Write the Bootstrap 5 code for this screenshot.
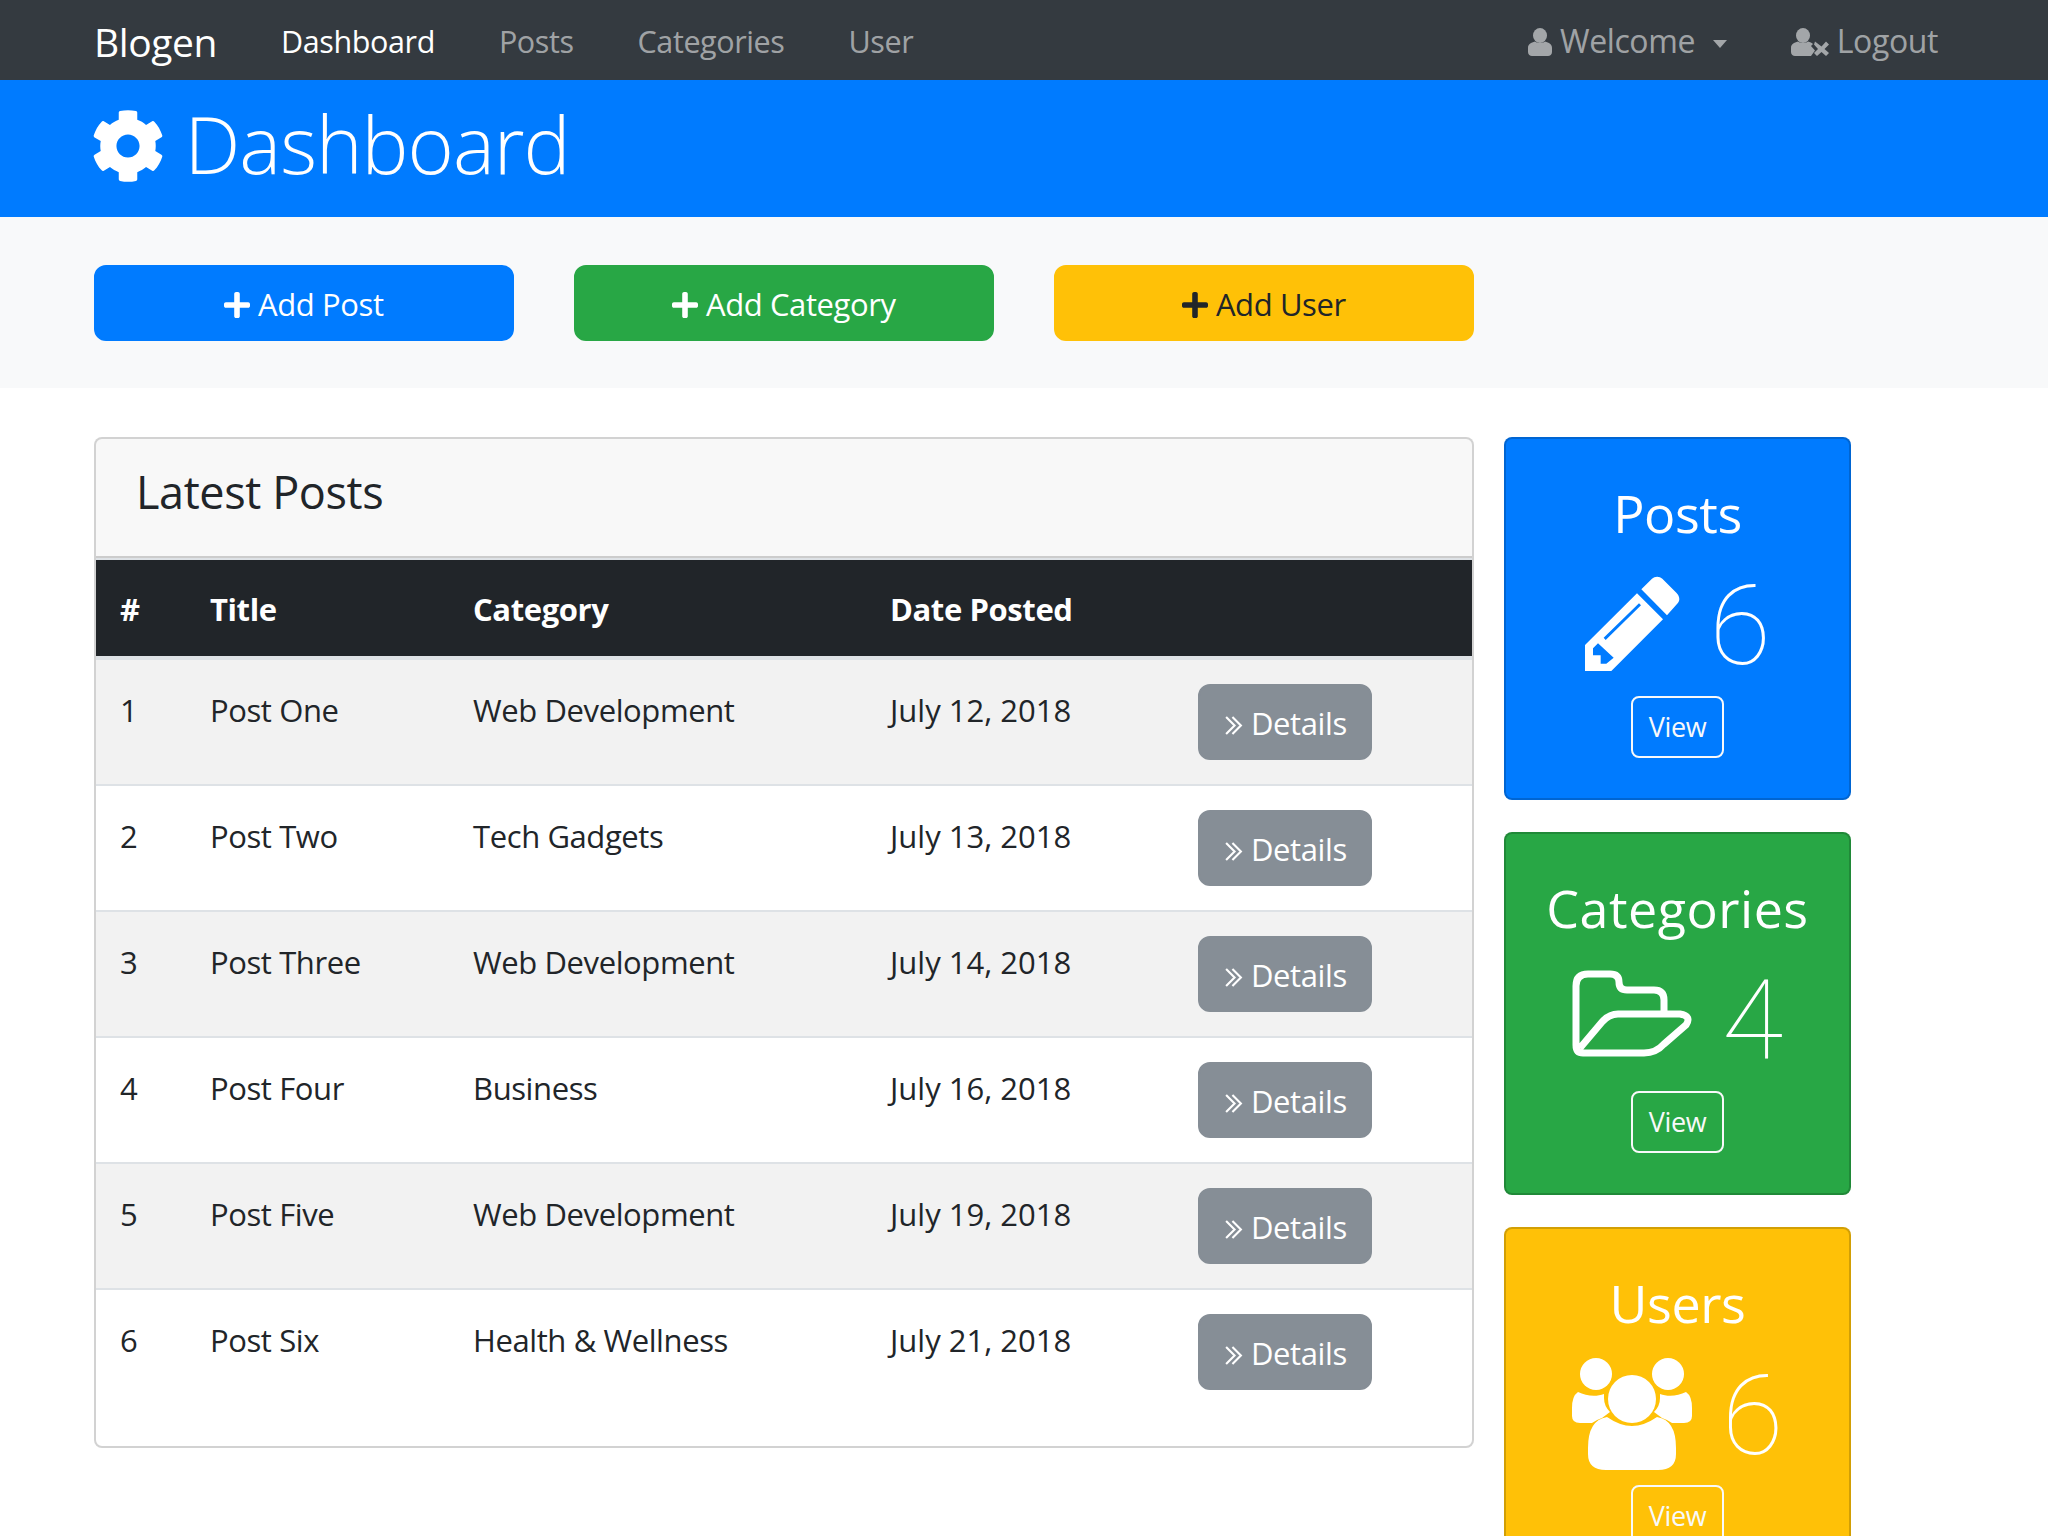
<!DOCTYPE html>
<html lang="en">
<head>
  <meta charset="UTF-8" />
  <meta name="viewport" content="width=device-width, initial-scale=1.0"/>
  <title>Blogen Admin</title>
  <link href="https://cdn.jsdelivr.net/npm/bootstrap@5.3.3/dist/css/bootstrap.min.css" rel="stylesheet">
  <style>
    :root {
      --bs-body-font-family: "Open Sans", "Noto Sans", sans-serif;
      --bs-body-font-size: 31px;
      --bs-body-line-height: 1.548;
      --bs-primary-rgb: 0, 123, 255;
      --bs-success-rgb: 40, 167, 69;
      --bs-warning-rgb: 255, 193, 7;
      --bs-dark-rgb: 52, 58, 64;
      --bs-border-width: 2px;
      --bs-border-radius: 8px;
      --bs-border-radius-sm: 6.4px;
    }
    html { font-size: 32px; }
    html, body { height: 1536px; overflow: hidden; }
    body { letter-spacing: -0.4px; }
    .container { --bs-gutter-x: 60px; max-width: 1920px; }
    .row { --bs-gutter-x: 60px; }

    .top-bar { padding: 0; --bs-navbar-nav-link-padding-x: 32px; }
    .top-bar .navbar-brand { font-size: 39px; padding: 3px 0 0; margin-right: 32px; line-height: 60px; }
    .top-bar .nav-link { padding-top: 17px; padding-bottom: 15px; font-size: 30.5px; line-height: 48px; }
    .top-bar .ms-auto .nav-link { font-size: 32px; }
    .logout-item { --bs-navbar-nav-link-padding-x: 16px; }
    .logout-item .nav-link { margin-left: 16px; }
    .top-bar .dropdown-toggle::after { border-width: 8px 7.5px 0; margin-left: 10px; vertical-align: 5px; }
    .nav-ico { fill: currentColor; vertical-align: -3px; }

    .page-head { padding: 16px 0 25px; }
    .page-head h1 { font-size: 79px; font-weight: 300; line-height: 96px; margin: 0; letter-spacing: -1px; }
    .page-head svg { width: 74px; height: 74px; fill: #fff; vertical-align: -9px; margin: 0 0 0 -3px; }

    .action-bar { padding: 48px 0 47px; }
    .btn { font-size: 31px; line-height: 48px; padding-top: 13px; padding-bottom: 11px; }
    .btn-primary { --bs-btn-bg: #007bff; --bs-btn-border-color: #007bff; }
    .btn-success { --bs-btn-bg: #28a745; --bs-btn-border-color: #28a745; }
    .btn-warning { --bs-btn-bg: #ffc107; --bs-btn-border-color: #ffc107; --bs-btn-color: #212529; }
    .btn-secondary { --bs-btn-bg: #868e96; --bs-btn-border-color: #868e96; }
    .plus-ico { width: 26px; height: 30px; fill: currentColor; vertical-align: -4px; }

    .content-area { padding-top: 49px; }
    .latest-head { padding: 24px 40px 19px; }
    .latest-head h4 { font-size: 45px; font-weight: 400; margin-bottom: 16px; line-height: 57.6px; }
    .post-table { table-layout: fixed; margin-bottom: 32px; }
    .post-table th, .post-table td { padding: 26px 24px 22px; border-top: 2px solid #dee2e6; border-bottom: 0; line-height: 48px; }
    .post-table th { font-weight: 700; padding-top: 25px; padding-bottom: 23px; }
    .post-table tbody tr:first-child td { border-top-width: 4px; }
    .post-table td:nth-child(4) { letter-spacing: 0; }
    .post-table td:last-child { padding-top: 24px; padding-bottom: 24px; }
    .post-table .btn { display: block; width: 174px; padding-left: 24px; padding-right: 0; text-align: left; }
    .details-btn svg { width: 19px; height: 19px; fill: none; stroke: currentColor; stroke-width: 2; vertical-align: 0; margin-right: 8px; }

    .side-col { padding-left: 0; padding-right: 133px; }
    .stat-card { margin-bottom: 32px; }
    .stat-card .card-body { padding: 40px; }
    .stat-card h3 { font-size: 52px; font-weight: 400; line-height: 67.2px; margin-bottom: 16px; white-space: nowrap; }
    .stat-card h3.wide-title { letter-spacing: 0.5px; }
    .stat-line { font-family: Roboto, sans-serif; font-size: 112px; font-weight: 100; line-height: 128px; padding-bottom: 5.6px; margin: 0; }
    .stat-line svg { fill: #fff; margin-right: 30px; }
    .pencil-ico { vertical-align: -7px; }
    .folder-ico { vertical-align: 2px; }
    .people-ico { vertical-align: -16px; }
    .stat-card .view-btn { padding: 8px 16px; font-size: 27px; line-height: 42px; }
  </style>
</head>
<body>

  <nav class="navbar navbar-expand-lg navbar-dark bg-dark top-bar">
    <div class="container">
      <a class="navbar-brand" href="#">Blogen</a>
      <ul class="navbar-nav">
        <li class="nav-item"><a class="nav-link active" href="#">Dashboard</a></li>
        <li class="nav-item"><a class="nav-link" href="#">Posts</a></li>
        <li class="nav-item"><a class="nav-link" href="#">Categories</a></li>
        <li class="nav-item"><a class="nav-link" href="#">User</a></li>
      </ul>
      <ul class="navbar-nav ms-auto">
        <li class="nav-item dropdown">
          <a class="nav-link dropdown-toggle" href="#" data-bs-toggle="dropdown">
            <svg class="nav-ico" width="24" height="28" viewBox="0 0 24 28"><ellipse cx="12" cy="7.500" rx="7" ry="7.500"/><path d="M0 24V20C0 16 3 14.500 7 13.500 10 15.500 14 15.500 17 13.500 21 14.500 24 16 24 20V24C24 26.500 22 28 20 28H4C2 28 0 26.500 0 24Z"/></svg> Welcome
          </a>
        </li>
        <li class="nav-item logout-item">
          <a class="nav-link" href="#">
            <svg class="nav-ico" width="38" height="28" viewBox="0 0 38 28"><ellipse cx="12" cy="7.500" rx="7" ry="7.500"/><path d="M0 24V20C0 16 3 14.500 7 13.500 10 15.500 14 15.500 17 13.500 19 14 21 15 22 16L20 18 24 22.500 20 28H4C2 28 0 26.500 0 24Z"/><path d="M24 13.500 30.500 18.500 35 13.500 38 16.500 33.500 21 38 25 35 28 30.500 24 26 28 23 25 27 21 23 16.500Z"/></svg> Logout
          </a>
        </li>
      </ul>
    </div>
  </nav>

  <header class="bg-primary text-white page-head">
    <div class="container">
      <h1>
        <svg viewBox="0 0 512 512"><path d="M487.400 315.700l-42.600-24.600c4.300-23.200 4.300-47 0-70.200l42.600-24.600c4.900-2.800 7.100-8.600 5.500-14-11.100-35.600-30-67.800-54.700-94.600-3.800-4.100-10-5.100-14.800-2.300L380.800 110c-17.900-15.400-38.500-27.300-60.800-35.100V25.800c0-5.600-3.900-10.500-9.400-11.700-36.700-8.200-74.300-7.800-109.200 0-5.500 1.200-9.400 6.100-9.400 11.700V75c-22.200 7.900-42.800 19.800-60.800 35.100L88.700 85.500c-4.900-2.800-11-1.900-14.800 2.300-24.700 26.700-43.600 58.900-54.700 94.600-1.700 5.400.6 11.200 5.500 14L67.300 221c-4.300 23.200-4.300 47 0 70.200l-42.600 24.600c-4.900 2.800-7.100 8.600-5.500 14 11.100 35.600 30 67.800 54.700 94.600 3.800 4.100 10 5.100 14.800 2.300l42.600-24.600c17.900 15.400 38.500 27.300 60.800 35.100v49.200c0 5.600 3.900 10.500 9.400 11.700 36.700 8.200 74.300 7.800 109.200 0 5.500-1.200 9.400-6.100 9.400-11.700v-49.200c22.200-7.900 42.800-19.800 60.800-35.100l42.600 24.600c4.900 2.800 11 1.900 14.800-2.300 24.700-26.700 43.600-58.900 54.700-94.600 1.500-5.500-.7-11.300-5.600-14.100zM256 336c-44.100 0-80-35.900-80-80s35.900-80 80-80 80 35.900 80 80-35.900 80-80 80z"/></svg>
        Dashboard
      </h1>
    </div>
  </header>

  <section class="bg-light action-bar">
    <div class="container">
      <div class="row">
        <div class="col-md-3"><a href="#" class="btn btn-primary w-100"><svg class="plus-ico" viewBox="0 0 448 512"><path d="M416 208H272V64c0-17.670-14.330-32-32-32h-32c-17.670 0-32 14.330-32 32v144H32c-17.670 0-32 14.330-32 32v32c0 17.670 14.330 32 32 32h144v144c0 17.670 14.330 32 32 32h32c17.670 0 32-14.330 32-32V304h144c17.670 0 32-14.330 32-32v-32c0-17.670-14.330-32-32-32z"/></svg> Add Post</a></div>
        <div class="col-md-3"><a href="#" class="btn btn-success w-100"><svg class="plus-ico" viewBox="0 0 448 512"><path d="M416 208H272V64c0-17.670-14.330-32-32-32h-32c-17.670 0-32 14.330-32 32v144H32c-17.670 0-32 14.330-32 32v32c0 17.670 14.330 32 32 32h144v144c0 17.670 14.330 32 32 32h32c17.670 0 32-14.330 32-32V304h144c17.670 0 32-14.330 32-32v-32c0-17.670-14.330-32-32-32z"/></svg> Add Category</a></div>
        <div class="col-md-3"><a href="#" class="btn btn-warning w-100"><svg class="plus-ico" viewBox="0 0 448 512"><path d="M416 208H272V64c0-17.670-14.330-32-32-32h-32c-17.670 0-32 14.330-32 32v144H32c-17.670 0-32 14.330-32 32v32c0 17.670 14.330 32 32 32h144v144c0 17.670 14.330 32 32 32h32c17.670 0 32-14.330 32-32V304h144c17.670 0 32-14.330 32-32v-32c0-17.670-14.330-32-32-32z"/></svg> Add User</a></div>
      </div>
    </div>
  </section>

  <section class="content-area">
    <div class="container">
      <div class="row">
        <div class="col-md-9">
          <div class="card">
            <div class="card-header latest-head"><h4>Latest Posts</h4></div>
            <table class="table table-striped post-table">
              <thead class="table-dark">
                <tr>
                  <th style="width:90px">#</th>
                  <th style="width:263px">Title</th>
                  <th style="width:417px">Category</th>
                  <th style="width:308px">Date Posted</th>
                  <th></th>
                </tr>
              </thead>
              <tbody id="postRows"></tbody>
            </table>
          </div>
        </div>

        <div class="col-md-3 side-col">
          <div class="card text-center bg-primary text-white stat-card">
            <div class="card-body">
              <h3>Posts</h3>
              <div class="stat-line">
                <svg class="pencil-ico" width="95" height="95" viewBox="316 470 285 285"><path d="M485 510 517 478C525 470 540 470 548 478L590 520C600 530 602 543 594 552L562 588Z"/><path fill-rule="evenodd" d="M472 522 550 600 395 755H316V677ZM372 655 378 662 484 558 478 552ZM355 672 340 687V708H363V733H380L402 715Z"/></svg>6
              </div>
              <a href="#" class="btn btn-outline-light btn-sm view-btn">View</a>
            </div>
          </div>

          <div class="card text-center bg-success text-white stat-card">
            <div class="card-body">
              <h3 class="wide-title">Categories</h3>
              <div class="stat-line">
                <svg class="folder-ico" width="120" height="87" viewBox="0 0 120 87"><path style="fill:none;stroke:#fff;stroke-width:7" d="M4 75V16Q4 4 16 4H38Q47 4 47 12 47 20 55 20H82Q92 20 92 30V43M8 78 30 52Q37 44 46 44H108Q120 46 114 55L92 74Q84 83 72 83H11Q4 83 4 75"/></svg>4
              </div>
              <a href="#" class="btn btn-outline-light btn-sm view-btn">View</a>
            </div>
          </div>

          <div class="card text-center bg-warning text-white stat-card">
            <div class="card-body">
              <h3>Users</h3>
              <div class="stat-line">
                <svg class="people-ico" width="120" height="112" viewBox="0 0 120 112">
                  <ellipse cx="24" cy="16" rx="16" ry="16"/><ellipse cx="96" cy="16" rx="16" ry="16"/>
                  <path d="M6 34C14 38 24 39 32 36V40Q32 48 38 54L30 60Q24 62 20 65H8Q0 65 0 58V50Q0 38 6 34Z"/>
                  <path d="M114 34C106 38 96 39 88 36V40Q88 48 82 54L90 60Q96 62 100 65H112Q120 65 120 58V50Q120 38 114 34Z"/>
                  <ellipse cx="60" cy="41" rx="24" ry="24"/>
                  <path d="M35 59Q48 68 60 68 72 68 85 59 104 62 104 90V96Q104 112 86 112H34Q16 112 16 96V90Q16 62 35 59Z"/>
                </svg>6
              </div>
              <a href="#" class="btn btn-outline-light btn-sm view-btn">View</a>
            </div>
          </div>
        </div>
      </div>
    </div>
  </section>

  <script src="https://cdn.jsdelivr.net/npm/bootstrap@5.3.3/dist/js/bootstrap.bundle.min.js"></script>
  <script>
    const posts = [
      ["Post One", "Web Development", "July 12, 2018"],
      ["Post Two", "Tech Gadgets", "July 13, 2018"],
      ["Post Three", "Web Development", "July 14, 2018"],
      ["Post Four", "Business", "July 16, 2018"],
      ["Post Five", "Web Development", "July 19, 2018"],
      ["Post Six", "Health &amp; Wellness", "July 21, 2018"]
    ];
    document.getElementById("postRows").innerHTML = posts.map((p, i) => `
      <tr>
        <td>${i + 1}</td><td>${p[0]}</td><td>${p[1]}</td><td>${p[2]}</td>
        <td><a href="#" class="btn btn-secondary details-btn"><svg viewBox="1 0 16 18"><path d="M2 1 10 9 2 17M8 1 16 9 8 17"/></svg>Details</a></td>
      </tr>`).join("");
  </script>
</body>
</html>
